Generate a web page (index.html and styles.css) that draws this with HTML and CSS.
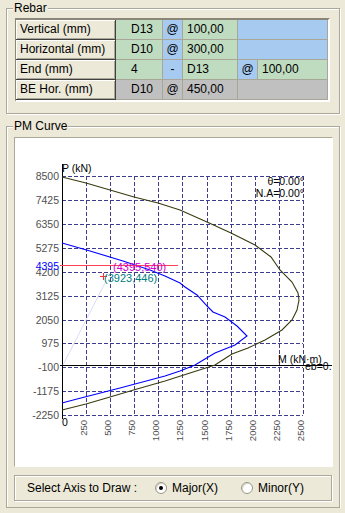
FILE: index.html
```html
<!DOCTYPE html>
<html lang="en">
<head>
  <meta charset="UTF-8" />
  <title>Rebar / PM Curve</title>
  <link rel="stylesheet" href="styles.css">
</head>
<body>

  <fieldset class="group group-rebar">
    <legend>Rebar</legend>
    <div class="rebar-table">
      <div class="rebar-row">
        <div class="cell head">Vertical (mm)</div>
        <div class="cell green code">D13</div>
        <div class="cell blue mark">@</div>
        <div class="cell green val">100,00</div>
        <div class="cell blue span2"></div>
      </div>
      <div class="rebar-row">
        <div class="cell head">Horizontal (mm)</div>
        <div class="cell green code">D10</div>
        <div class="cell blue mark">@</div>
        <div class="cell green val">300,00</div>
        <div class="cell blue span2"></div>
      </div>
      <div class="rebar-row">
        <div class="cell head">End (mm)</div>
        <div class="cell green code">4</div>
        <div class="cell blue mark">-</div>
        <div class="cell green val">D13</div>
        <div class="cell blue mark">@</div>
        <div class="cell green val">100,00</div>
      </div>
      <div class="rebar-row">
        <div class="cell head">BE Hor. (mm)</div>
        <div class="cell gray code">D10</div>
        <div class="cell gray mark">@</div>
        <div class="cell gray val">450,00</div>
        <div class="cell gray span2"></div>
      </div>
    </div>
  </fieldset>

  <fieldset class="group group-pm">
    <legend>PM Curve</legend>
    <div class="chart-panel">
      <svg class="pm-chart" width="317" height="328" viewBox="15 138 317 328">
        <!-- grid -->
        <path class="grid" d="M62 176.5H303M62 200.5H303M62 224.5H303M62 248.5H303M62 272.5H303M62 296.5H303M62 320.5H303M62 343.5H303M62 367.5H303M62 391.5H303M62 415.5H303"/>
        <path class="grid" d="M86.5 176V415M110.5 176V415M134.5 176V415M158.5 176V415M182.5 176V415M207.5 176V415M231.5 176V415M255.5 176V415M279.5 176V415M303.5 176V415"/>

        <!-- axes -->
        <path class="axis" d="M62.5 164V419M60 365.5H332"/>
        <path class="trace" d="M63 365L106 281"/>

        <!-- curves -->
        <polyline class="curve-outer" points="62,177 86,183 110,190 134,197 158,203 180,210 207,222 231,233 255,245 271,257 280,270 292,282 298,293 299,300 297,310 292,320 282,330 265,340 248,348 232,354 215,365 190,373 165,381 137,389 110,397 86,404 62,410"/>
        <polyline class="curve-inner" points="62,243 90,251 123,261 150,270 165,276 180,283 185,287 197,295 208,307 213,312 225,317 237,326 247,336 235,345 215,353 195,365 180,371 165,376 120,388 77,399 62,403"/>

        <!-- y labels -->
        <text class="ylab" x="59" y="180">8500</text>
        <text class="ylab" x="59" y="204">7425</text>
        <text class="ylab" x="59" y="228">6350</text>
        <text class="ylab" x="59" y="252">5275</text>
        <text class="ylab" x="59" y="276">4200</text>
        <text class="ylab" x="59" y="300">3125</text>
        <text class="ylab" x="59" y="324">2050</text>
        <text class="ylab" x="59" y="347">975</text>
        <text class="ylab" x="59" y="371">-100</text>
        <text class="ylab" x="59" y="395">-1175</text>
        <text class="ylab" x="59" y="419">-2250</text>

        <!-- x labels -->
        <text class="xlab-zero" x="62" y="426">0</text>
        <text class="xlab" transform="translate(87 420) rotate(-90)">250</text>
        <text class="xlab" transform="translate(111 420) rotate(-90)">500</text>
        <text class="xlab" transform="translate(135 420) rotate(-90)">750</text>
        <text class="xlab" transform="translate(159 420) rotate(-90)">1000</text>
        <text class="xlab" transform="translate(183 420) rotate(-90)">1250</text>
        <text class="xlab" transform="translate(208 420) rotate(-90)">1500</text>
        <text class="xlab" transform="translate(232 420) rotate(-90)">1750</text>
        <text class="xlab" transform="translate(256 420) rotate(-90)">2000</text>
        <text class="xlab" transform="translate(280 420) rotate(-90)">2250</text>
        <text class="xlab" transform="translate(304 420) rotate(-90)">2500</text>

        <!-- axis titles -->
        <text class="axis-title" x="62" y="172">P (kN)</text>
        <text class="axis-title end" x="304" y="185">θ=0.00°</text>
        <text class="axis-title end" x="304" y="197">N.A=0.00°</text>
        <text class="axis-title" x="278" y="363">M (kN·m)</text>
        <text class="axis-title" x="305" y="370">eb=0.</text>

        <!-- load point -->
        <rect x="33" y="260" width="27" height="9" fill="#fff"/>
        <text class="load-value" x="59" y="270">4395</text>
        <path class="load-line" d="M60 265.5H178"/>
        <text class="load-label" x="113" y="271">(4395,540)</text>
        <path class="marker" d="M100 276.5H107M103.5 273V280"/>
        <text class="cap-label" x="104" y="282">(3923,446)</text>
      </svg>
    </div>

    <div class="axis-bar">
      <span class="axis-label">Select Axis to Draw :</span>
      <label class="option"><span class="radio checked"></span>Major(X)</label>
      <label class="option"><span class="radio"></span>Minor(Y)</label>
    </div>
  </fieldset>

</body>
</html>
```

FILE: styles.css
```css
body {
  margin: 0;
  background-color: #ECE9D8;
  font-family: "Liberation Sans", Arial, sans-serif;
  font-size: 12px;
  color: #000;
}

.group {
  margin: 1px 0 0 6px;
  width: 334px;
  min-width: 0;
  box-sizing: border-box;
  border: 1px solid #ACA899;
  box-shadow: 1px 1px 0 #fff, inset 1px 1px 0 #fff;
  padding: 2px 6px 11px 7px;
}

.group legend {
  padding: 0 1px;
  margin-left: -1px;
  line-height: 15px;
  background-color: #ECE9D8;
}

.group-pm {
  margin-top: 5px;
  padding: 3px 6px 6px 7px;
}

/* rebar table */
.rebar-table {
  margin-left: 1px;
  width: 315px;
  box-sizing: border-box;
  border-top: 2px solid #8A8778;
  border-left: 1px solid #8A8778;
  border-right: 2px solid #fff;
  border-bottom: 2px solid #fff;
}

.rebar-row {
  display: grid;
  grid-template-columns: 100px 47px 20px 55px 20px 70px;
  height: 20px;
}

.cell {
  height: 20px;
  box-sizing: border-box;
  line-height: 19px;
  border-right: 1px solid #A8A696;
  border-bottom: 1px solid #A8A696;
  white-space: nowrap;
  overflow: hidden;
}

.head {
  background-color: #ECE9D8;
  padding-left: 4px;
  border-right-color: #404040;
  border-bottom-color: #404040;
  box-shadow: inset 1px 1px 0 #fff, inset -1px -1px 0 #ACA899;
}

.green { background-color: #C0DCC0; }
.blue { background-color: #A6CAF0; }
.gray { background-color: #C0C0C0; }

.code { padding-left: 15px; }
.mark { text-align: center; }
.val { padding-left: 4px; }
.span2 { grid-column: span 2; }

/* chart */
.chart-panel {
  width: 319px;
  height: 330px;
  box-sizing: border-box;
  background-color: #fff;
  border: 1px solid;
  border-color: #ACA899 #fff #fff #ACA899;
}

.pm-chart {
  display: block;
  font-family: "Liberation Sans", Arial, sans-serif;
}

.grid {
  fill: none;
  stroke: #403C8C;
  stroke-width: 1;
  stroke-dasharray: 4 2;
}

.axis {
  fill: none;
  stroke: #000;
  stroke-width: 1;
}

.trace {
  stroke: #DCDCF6;
  stroke-width: 1;
}

.curve-outer {
  fill: none;
  stroke: #3A3A10;
  stroke-width: 1.1;
}

.curve-inner {
  fill: none;
  stroke: #0000FF;
  stroke-width: 1.1;
}

.ylab {
  font-size: 10.5px;
  fill: #505050;
  text-anchor: end;
}

.xlab {
  font-size: 9.5px;
  fill: #505050;
  text-anchor: end;
}

.xlab-zero {
  font-size: 10.5px;
  fill: #000;
}

.axis-title {
  font-size: 10.5px;
  fill: #000;
}

.axis-title.end { text-anchor: end; }

.load-value {
  font-size: 10.5px;
  fill: #0000FF;
  text-anchor: end;
}

.load-line {
  stroke: #FF4058;
  stroke-width: 1;
}

.load-label {
  font-size: 11px;
  fill: #D000D0;
}

.marker {
  stroke: #FF3030;
  stroke-width: 1;
}

.cap-label {
  font-size: 11px;
  fill: #008080;
}

/* axis selector */
.axis-bar {
  margin-top: 8px;
  width: 318px;
  height: 26px;
  box-sizing: border-box;
  border: 1px solid #ACA899;
  box-shadow: inset 1px 1px 0 #fff, 1px 1px 0 #fff;
  display: flex;
  align-items: center;
  padding-left: 12px;
}

.axis-label {
  width: 128px;
}

.option {
  display: flex;
  align-items: center;
  gap: 5px;
}

.option + .option {
  margin-left: 23px;
}

.radio {
  width: 12px;
  height: 12px;
  box-sizing: border-box;
  border-radius: 50%;
  background-color: #fff;
  border: 1px solid #9A9888;
  box-shadow: inset 1px 1px 0 #D8D4C8;
  display: flex;
  align-items: center;
  justify-content: center;
}

.radio.checked::after {
  content: "";
  width: 4px;
  height: 4px;
  border-radius: 50%;
  background-color: #000;
}
```
